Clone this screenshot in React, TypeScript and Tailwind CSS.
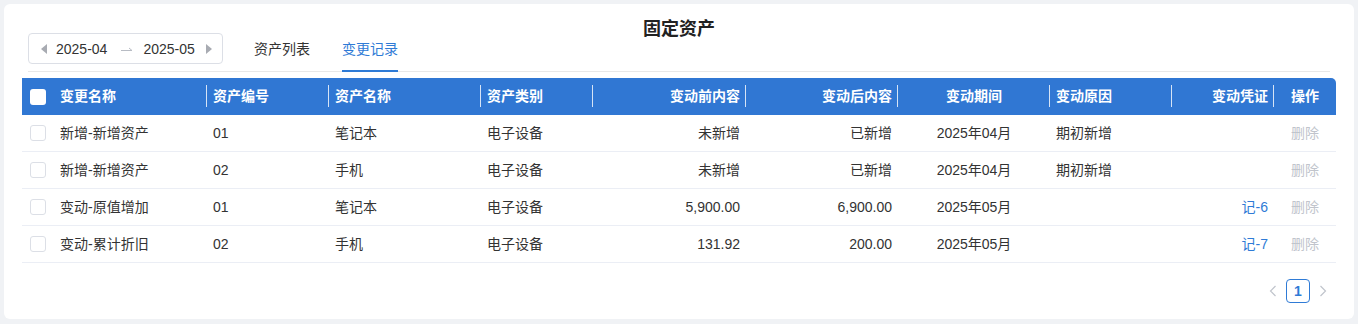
import React from 'react'

type Row = {
  name: string
  code: string
  asset: string
  category: string
  before: string
  after: string
  period: string
  reason: string
  voucher: string
}

const rows: Row[] = [
  { name: '新增-新增资产', code: '01', asset: '笔记本', category: '电子设备', before: '未新增', after: '已新增', period: '2025年04月', reason: '期初新增', voucher: '' },
  { name: '新增-新增资产', code: '02', asset: '手机', category: '电子设备', before: '未新增', after: '已新增', period: '2025年04月', reason: '期初新增', voucher: '' },
  { name: '变动-原值增加', code: '01', asset: '笔记本', category: '电子设备', before: '5,900.00', after: '6,900.00', period: '2025年05月', reason: '', voucher: '记-6' },
  { name: '变动-累计折旧', code: '02', asset: '手机', category: '电子设备', before: '131.92', after: '200.00', period: '2025年05月', reason: '', voucher: '记-7' },
]

const cols = 'grid grid-cols-[184px_122px_152px_112px_153px_152px_152px_122px_102px_62px]'

function HeadCell({ children, align = 'left', sep = true }: { children: React.ReactNode; align?: 'left' | 'right' | 'center'; sep?: boolean }) {
  const justify = align === 'right' ? 'justify-end' : align === 'center' ? 'justify-center' : 'justify-start'
  return (
    <div className={`relative flex items-center h-full pl-[7px] pr-[5px] ${justify}`}>
      {sep && <span className="absolute left-0 top-[7px] bottom-[8px] w-px bg-white/80" />}
      {children}
    </div>
  )
}

function Cell({ children, align = 'left' }: { children?: React.ReactNode; align?: 'left' | 'right' | 'center' }) {
  const justify = align === 'right' ? 'justify-end' : align === 'center' ? 'justify-center' : 'justify-start'
  return <div className={`flex items-center h-full pl-[7px] pr-[5px] ${justify}`}>{children}</div>
}

export default function App() {
  return (
    <div
      className="h-[324px] w-[1358px] bg-[#f0f2f5] p-1 text-[14px] text-[#333]"
      style={{ fontFamily: '"Liberation Sans", "Noto Sans CJK SC", sans-serif' }}
    >
      <div className="h-[315px] bg-white rounded-md pt-[12px]">
        <div className="text-center text-[18px] leading-[26px] font-bold text-[#222]">固定资产</div>

        <div className="px-6 -mt-[9px]">
          <div className="flex items-end border-b border-[#e8e8e8]">
            <div className="mb-[7px] flex items-center h-[31px] w-[195px] border border-[#dcdfe6] rounded-[4px] pl-[12px] pr-[10px]">
              <svg width="6" height="10" viewBox="0 0 6 10" className="mr-[9px]">
                <path d="M6 0 L0 5 L6 10 Z" fill="#a8abb2" />
              </svg>
              <span className="leading-none">2025-04</span>
              <svg width="12" height="6" viewBox="0 0 12 6" className="ml-[14px] mr-[10px] mt-[2px]">
                <path d="M0 3.5 H11 M8 1 L11 3.5" stroke="#b8bcc4" strokeWidth="1" fill="none" />
              </svg>
              <span className="leading-none">2025-05</span>
              <svg width="6" height="10" viewBox="0 0 6 10" className="ml-auto">
                <path d="M0 0 L6 5 L0 10 Z" fill="#a8abb2" />
              </svg>
            </div>
            <div className="flex ml-[31px] gap-[32px]">
              <div className="h-[33px] leading-[20px] border-b-2 border-transparent -mb-px">资产列表</div>
              <div className="h-[33px] leading-[20px] border-b-2 border-[#2f7bd6] text-[#2f7bd6] -mb-px">变更记录</div>
            </div>
          </div>
        </div>

        <div className="mx-[18px] mt-[6px]">
          <div className={`${cols} h-[37px] bg-[#3077d3] text-white font-bold rounded-tr-[5px]`}>
            <div className="flex items-center h-full pl-[8px]">
              <span className="w-[16px] h-[16px] rounded-[3px] bg-white" />
              <span className="ml-[14px]">变更名称</span>
            </div>
            <HeadCell>资产编号</HeadCell>
            <HeadCell>资产名称</HeadCell>
            <HeadCell>资产类别</HeadCell>
            <HeadCell align="right">变动前内容</HeadCell>
            <HeadCell align="right">变动后内容</HeadCell>
            <HeadCell align="center">变动期间</HeadCell>
            <HeadCell>变动原因</HeadCell>
            <HeadCell align="right">变动凭证</HeadCell>
            <HeadCell align="center">操作</HeadCell>
          </div>

          {rows.map((r, i) => (
            <div key={i} className={`${cols} h-[37px] border-b border-[#ebeef5]`}>
              <div className="flex items-center h-full pl-[8px]">
                <span className="w-[16px] h-[16px] rounded-[3px] border border-[#dcdfe6] bg-white" />
                <span className="ml-[14px]">{r.name}</span>
              </div>
              <Cell>{r.code}</Cell>
              <Cell>{r.asset}</Cell>
              <Cell>{r.category}</Cell>
              <Cell align="right">{r.before}</Cell>
              <Cell align="right">{r.after}</Cell>
              <Cell align="center">{r.period}</Cell>
              <Cell>{r.reason}</Cell>
              <Cell align="right">
                <span className="text-[#2f7bd6]">{r.voucher}</span>
              </Cell>
              <Cell align="center">
                <span className="text-[#c0c4cc]">删除</span>
              </Cell>
            </div>
          ))}
        </div>

        <div className="flex justify-end items-center mt-[16px] pr-[27px] gap-[9px]">
          <svg width="8" height="12" viewBox="0 0 8 12">
            <path d="M6.5 1 L1.5 6 L6.5 11" stroke="#c0c4cc" strokeWidth="1.2" fill="none" />
          </svg>
          <div className="w-[24px] h-[24px] flex items-center justify-center border border-[#2f7bd6] rounded-[4px] text-[#2f7bd6] font-bold text-[14px]">1</div>
          <svg width="8" height="12" viewBox="0 0 8 12">
            <path d="M1.5 1 L6.5 6 L1.5 11" stroke="#c0c4cc" strokeWidth="1.2" fill="none" />
          </svg>
        </div>
      </div>
    </div>
  )
}
